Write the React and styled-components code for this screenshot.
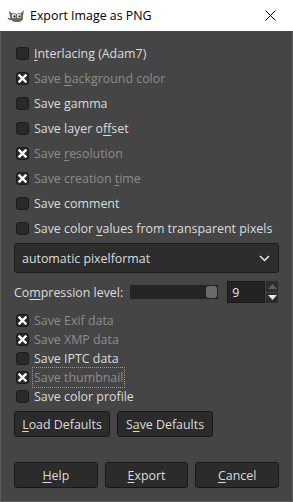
import React from 'react'
import styled, {createGlobalStyle} from 'styled-components'

const Global = createGlobalStyle`
  html, body { margin:0; padding:0; background:#454545; }
  body { font-family: "Open Sans", "Noto Sans", sans-serif; font-size:12.4px; }
`

const Window = styled.div`
  width:293px;
  height:502px;
  box-sizing:border-box;
  display:flex;
  flex-direction:column;
  background:#454545;
  border:1px solid #5e5e5e;
  border-top:none;
`
const TitleBar = styled.div`
  height:31px;
  margin:0 -1px;
  background:#fff;
  display:flex;
  align-items:center;
  padding:0 0 0 7px;
  color:#000;
  font-size:12.4px;
  & span{ margin-left:4px; flex:1; }
`
const Close = styled.div`
  width:46px;
  height:31px;
  display:flex;
  align-items:center;
  justify-content:center;
`
const Body = styled.div`
  flex:1;
  padding:10px 13px 0 13px;
  display:flex;
  flex-direction:column;
  color:#dadada;
`
const Row = styled.label`
  height:${p => p.h || 25}px;
  display:flex;
  align-items:center;
  padding-left:2px;
  color:${p => p.off ? '#8c8c8c' : '#dcdcdc'};
  white-space:nowrap;
  & u{ text-decoration:underline; text-underline-offset:2px; }
`
const Box = styled.span`
  width:13px;
  height:13px;
  box-sizing:border-box;
  border-radius:3px;
  background:#2a2a2a;
  border:1px solid #1b1b1b;
  margin-right:5px;
  display:flex;
  align-items:center;
  justify-content:center;
  flex:none;
`
const Focus = styled.span`
  outline:1px dotted #9a9a9a;
  outline-offset:1px;
`
const Combo = styled.div`
  margin-top:2px;
  height:30px;
  box-sizing:border-box;
  border:1px solid #1c1c1c;
  border-radius:3px;
  background:#2d2d2d;
  display:flex;
  align-items:center;
  justify-content:space-between;
  padding:0 8px 0 7px;
  color:#dcdcdc;
`
const CompRow = styled.div`
  margin-top:8px;
  height:22px;
  display:flex;
  align-items:center;
  color:#dcdcdc;
  & u{ text-underline-offset:2px; }
`
const Track = styled.div`
  margin-left:7px;
  width:88px;
  height:14px;
  background:#242424;
  display:flex;
  justify-content:flex-end;
  align-items:center;
  padding-right:1px;
  box-sizing:border-box;
`
const Knob = styled.div`
  width:11px;
  height:12px;
  border-radius:3px;
  background:#6b6b6b;
`
const Spin = styled.div`
  margin-left:9px;
  display:flex;
  height:22px;
`
const Entry = styled.div`
  width:38px;
  box-sizing:border-box;
  background:#232323;
  border:1px solid #1a1a1a;
  padding-left:4px;
  display:flex;
  align-items:center;
  color:#e6e6e6;
`
const Arrows = styled.div`
  width:12px;
  display:flex;
  flex-direction:column;
  margin-left:1px;
  gap:1px;
`
const Arrow = styled.div`
  flex:1;
  background:#2c2c2c;
  display:flex;
  align-items:center;
  justify-content:center;
`
const Group = styled.div`
  margin-top:8px;
  display:flex;
  flex-direction:column;
`
const Buttons = styled.div`
  display:flex;
  gap:${p => p.gap || 7}px;
  margin-top:${p => p.top}px;
`
const Button = styled.div`
  width:${p => p.w}px;
  height:26px;
  box-sizing:border-box;
  border:1px solid #181818;
  border-radius:3px;
  background:#2b2b2b;
  color:#dcdcdc;
  display:flex;
  align-items:center;
  justify-content:center;
  & u{ text-underline-offset:2px; }
`

const Check = () => (
  <svg width="9" height="9" viewBox="0 0 9 9">
    <path d="M1.5 1.5 L7.5 7.5 M7.5 1.5 L1.5 7.5" stroke="#fff" strokeWidth="2.4" strokeLinecap="square"/>
  </svg>
)

const Opt = ({on, off, h, children}) => (
  <Row off={off} h={h}>
    <Box>{on && <Check/>}</Box>
    {children}
  </Row>
)

const Wilber = () => (
  <svg width="19" height="16" viewBox="0 0 19 16">
    <path d="M2 3 L6 6 L13 6 L17 2 L16 8 Q17 14 10 14 Q3 14 3 9 Z" fill="#6f665c"/>
    <ellipse cx="7" cy="8" rx="2.6" ry="2.6" fill="#fff" stroke="#333" strokeWidth="0.6"/>
    <ellipse cx="12" cy="8" rx="2.6" ry="2.6" fill="#fff" stroke="#333" strokeWidth="0.6"/>
    <circle cx="7.5" cy="8.3" r="1.1" fill="#111"/>
    <circle cx="12.5" cy="8.3" r="1.1" fill="#111"/>
    <path d="M1 10 Q3 12 5 11" stroke="#6f665c" strokeWidth="1.5" fill="none"/>
    <path d="M8 12 L9.5 13.5 L11 12" stroke="#a44" strokeWidth="0.8" fill="none"/>
  </svg>
)

const App = () => (
  <>
    <Global/>
    <Window>
      <TitleBar>
        <Wilber/>
        <span>Export Image as PNG</span>
        <Close>
          <svg width="11" height="11" viewBox="0 0 11 11">
            <path d="M0.5 0.5 L10.5 10.5 M10.5 0.5 L0.5 10.5" stroke="#000" strokeWidth="1"/>
          </svg>
        </Close>
      </TitleBar>
      <Body>
        <Opt><span><u>I</u>nterlacing (Adam7)</span></Opt>
        <Opt on off><span>Save <u>b</u>ackground color</span></Opt>
        <Opt><span>Save gamma</span></Opt>
        <Opt><span>Save layer o<u>ff</u>set</span></Opt>
        <Opt on off><span>Save <u>r</u>esolution</span></Opt>
        <Opt on off><span>Save creation <u>t</u>ime</span></Opt>
        <Opt><span>Save comment</span></Opt>
        <Opt><span>Save color <u>v</u>alues from transparent pixels</span></Opt>
        <Combo>
          <span>automatic pixelformat</span>
          <svg width="11" height="7" viewBox="0 0 11 7">
            <path d="M1 1 L5.5 5.5 L10 1" stroke="#e8e8e8" strokeWidth="1.5" fill="none"/>
          </svg>
        </Combo>
        <CompRow>
          <span>Co<u>m</u>pression level:</span>
          <Track><Knob/></Track>
          <Spin>
            <Entry>9</Entry>
            <Arrows>
              <Arrow>
                <svg width="9" height="5" viewBox="0 0 9 5"><path d="M0 5 L4.5 0 L9 5 Z" fill="#5e5e5e"/></svg>
              </Arrow>
              <Arrow>
                <svg width="9" height="5" viewBox="0 0 9 5"><path d="M0 0 L4.5 5 L9 0 Z" fill="#e6e6e6"/></svg>
              </Arrow>
            </Arrows>
          </Spin>
        </CompRow>
        <Group>
          <Opt on off h={19}><span>Save Exif data</span></Opt>
          <Opt on off h={19}><span>Save XMP data</span></Opt>
          <Opt h={19}><span>Save IPTC data</span></Opt>
          <Opt on off h={19}><Focus>Save thumbnail</Focus></Opt>
          <Opt h={19}><span>Save color profile</span></Opt>
        </Group>
        <Buttons top={5}>
          <Button w={96}><span><u>L</u>oad Defaults</span></Button>
          <Button w={96}><span>S<u>a</u>ve Defaults</span></Button>
        </Buttons>
        <Buttons top={25}>
          <Button w={84}><span><u>H</u>elp</span></Button>
          <Button w={84}><span><u>E</u>xport</span></Button>
          <Button w={84}><span><u>C</u>ancel</span></Button>
        </Buttons>
      </Body>
    </Window>
  </>
)

export default App
